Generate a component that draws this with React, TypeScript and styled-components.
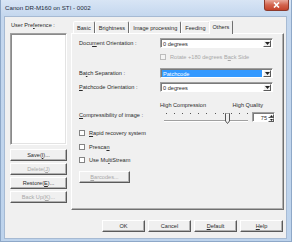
import styled, { createGlobalStyle } from "styled-components";

const GlobalStyle = createGlobalStyle`
  html, body {
    margin: 0;
    padding: 0;
    background: #ffffff;
  }
  body {
    font-family: "Liberation Sans", Arial, sans-serif;
    font-size: 5.6px;
    color: #2a2a2a;
  }
`;

const Window = styled.div`
  width: 292px;
  height: 242px;
  box-sizing: border-box;
  display: flex;
  flex-direction: column;
  background: linear-gradient(#d8e5f5, #c4d7ee 16px, #bdd3ec);
  padding: 0 4px 3px 3px;
  border-left: 1px solid #8ea8c8;
  border-bottom: 1px solid #8ea8c8;
  border-right: 1px solid #8ea8c8;
`;

const TitleBar = styled.div`
  height: 16px;
  display: flex;
  align-items: flex-start;
`;

const TitleText = styled.span`
  font-size: 6.2px;
  line-height: 16px;
  color: #1e2b3c;
  padding-left: 1px;
`;

const CloseButton = styled.div`
  margin-left: auto;
  margin-right: -2px;
  width: 25px;
  height: 11px;
  box-sizing: border-box;
  border: 1px solid #8c3a2c;
  border-top: none;
  border-radius: 0 0 3px 3px;
  background: linear-gradient(#e9a99b, #d2634d 50%, #c4432b);
  display: flex;
  align-items: center;
  justify-content: center;
`;

const Client = styled.div`
  flex: 1;
  display: flex;
  background: #f0f0f0;
  border: 1px solid #a6bad3;
  padding: 2px 2px 6px 5px;
`;

const LeftColumn = styled.div`
  width: 60px;
  margin-right: 4px;
  display: flex;
  flex-direction: column;
  padding-top: 2px;
`;

const Caption = styled.div`
  height: 8px;
  line-height: 8px;
  padding-left: 1px;
  white-space: nowrap;
`;

const ListBox = styled.div`
  margin-top: 4px;
  height: 112px;
  box-sizing: border-box;
  background: #ffffff;
  border: 1px solid;
  border-color: #a0a0a0 #ffffff #ffffff #a0a0a0;
  box-shadow: inset 1px 1px 0 #8a8a8a, inset -1px -1px 0 #e3e3e3;
`;

const ButtonStack = styled.div`
  margin-top: 4px;
  display: flex;
  flex-direction: column;
  gap: 2px;
`;

const Button = styled.div<{ $width?: number; $disabled?: boolean }>`
  width: ${(p) => (p.$width ? `${p.$width}px` : "100%")};
  height: 12px;
  box-sizing: border-box;
  display: flex;
  align-items: center;
  justify-content: center;
  background: #f0f0f0;
  border: 1px solid;
  border-color: #ffffff #5a5a5a #5a5a5a #ffffff;
  box-shadow: inset -1px -1px 0 #b0b0b0;
  color: ${(p) => (p.$disabled ? "#a8a8a8" : "#2a2a2a")};
  white-space: nowrap;
`;

const RightColumn = styled.div`
  flex: 1;
  display: flex;
  flex-direction: column;
`;

const TabStrip = styled.div`
  height: 14px;
  display: flex;
  align-items: flex-end;
  padding-left: 2px;
`;

const Tab = styled.div<{ $active?: boolean }>`
  height: ${(p) => (p.$active ? "14px" : "12px")};
  box-sizing: border-box;
  padding: 0 3px;
  display: flex;
  align-items: center;
  border: 1px solid;
  border-bottom: none;
  border-color: #ffffff #707070 transparent #ffffff;
  border-radius: 2px 2px 0 0;
  background: #f0f0f0;
  white-space: nowrap;
  position: relative;
  z-index: ${(p) => (p.$active ? 2 : 1)};
  margin: ${(p) => (p.$active ? "0 -1px -1px -1px" : "0")};
  padding-bottom: ${(p) => (p.$active ? "2px" : "0")};
`;

const Panel = styled.div`
  height: 177px;
  box-sizing: border-box;
  border: 1px solid;
  border-color: #ffffff #707070 #707070 #ffffff;
  box-shadow: inset -1px -1px 0 #b0b0b0;
  background: #f0f0f0;
  padding: 0 7px 0 7px;
  display: flex;
  flex-direction: column;
`;

const FieldRow = styled.div<{ $top: number; $height: number }>`
  margin-top: ${(p) => p.$top}px;
  height: ${(p) => p.$height}px;
  display: grid;
  grid-template-columns: 81px 113px;
  align-items: center;
  white-space: nowrap;
`;

const Select = styled.div`
  height: 10px;
  box-sizing: border-box;
  background: #ffffff;
  border: 1px solid;
  border-color: #a0a0a0 #ffffff #ffffff #a0a0a0;
  box-shadow: inset 1px 1px 0 #7a7a7a;
  display: flex;
  padding: 1px 1px 0 1px;
`;

const SelectValue = styled.div<{ $selected?: boolean }>`
  flex: 1;
  display: flex;
  align-items: center;
  padding-left: 1px;
  margin-right: 1px;
  background: ${(p) => (p.$selected ? "#3399ff" : "transparent")};
  color: ${(p) => (p.$selected ? "#ffffff" : "#2a2a2a")};
`;

const ArrowBox = styled.div`
  width: 8px;
  box-sizing: border-box;
  background: #f0f0f0;
  border: 1px solid;
  border-color: #ffffff #5a5a5a #5a5a5a #ffffff;
  display: flex;
  align-items: center;
  justify-content: center;
`;

const Check = styled.span<{ $disabled?: boolean }>`
  display: inline-flex;
  align-items: center;
  gap: 4px;
  color: ${(p) => (p.$disabled ? "#a8a8a8" : "#2a2a2a")};
`;

const Box = styled.span<{ $disabled?: boolean }>`
  width: 6px;
  height: 6px;
  box-sizing: border-box;
  border: 1px solid ${(p) => (p.$disabled ? "#bdbdbd" : "#848484")};
  background: ${(p) => (p.$disabled ? "#f4f4f4" : "#ffffff")};
`;

const ScaleLabels = styled.div`
  display: flex;
  justify-content: space-between;
  width: 103px;
`;

const SliderRow = styled.div`
  margin-top: 2px;
  height: 16px;
  display: grid;
  grid-template-columns: 81px 116px;
  white-space: nowrap;
`;

const SideLabel = styled.div`
  padding-top: 2px;
`;

const SliderArea = styled.div`
  display: flex;
  align-items: flex-start;
`;

const Slider = styled.div`
  width: 90px;
  height: 16px;
  position: relative;
`;

const Ticks = styled.div`
  display: flex;
  justify-content: space-between;
  padding: 3px 2px 0 6px;
`;

const Tick = styled.span`
  width: 1px;
  height: 1px;
  background: #555555;
`;

const Track = styled.div`
  margin: 6px 0 0 4px;
  width: 84px;
  height: 2px;
  box-sizing: border-box;
  border-top: 1px solid #a0a0a0;
  border-bottom: 1px solid #ffffff;
`;

const Thumb = styled.svg`
  position: absolute;
  left: 65px;
  top: 3px;
`;

const Spin = styled.div`
  margin-left: 2px;
  margin-top: 2px;
  width: 23px;
  height: 10px;
  box-sizing: border-box;
  background: #ffffff;
  border: 1px solid;
  border-color: #a0a0a0 #ffffff #ffffff #a0a0a0;
  box-shadow: inset 1px 1px 0 #7a7a7a;
  display: flex;
  padding: 1px 0 0 1px;
`;

const SpinValue = styled.div`
  flex: 1;
  text-align: right;
  padding-right: 1px;
  line-height: 8px;
`;

const SpinArrows = styled.div`
  width: 6px;
  display: flex;
  flex-direction: column;
`;

const SpinHalf = styled.div`
  flex: 1;
  box-sizing: border-box;
  background: #f0f0f0;
  border: 1px solid;
  border-color: #ffffff #5a5a5a #5a5a5a #ffffff;
  display: flex;
  align-items: center;
  justify-content: center;
`;

const CheckRow = styled.div<{ $top: number }>`
  margin-top: ${(p) => p.$top}px;
  height: 8px;
  display: flex;
  align-items: center;
  white-space: nowrap;
`;

const BarcodesWrap = styled.div`
  margin-top: 7px;
`;

const ButtonRow = styled.div`
  margin-top: 10px;
  display: flex;
  justify-content: flex-end;
  gap: 3px;
  padding-right: 1px;
`;

const Mn = styled.span`
  text-decoration: underline;
`;

const DownArrow = () => (
  <svg width="5" height="3" viewBox="0 0 5 3">
    <path d="M0 0h5L2.5 3z" fill="#222" />
  </svg>
);

const Dropdown = ({ value, selected }: { value: string; selected?: boolean }) => (
  <Select>
    <SelectValue $selected={selected}>{value}</SelectValue>
    <ArrowBox>
      <DownArrow />
    </ArrowBox>
  </Select>
);

const tabs = ["Basic", "Brightness", "Image processing", "Feeding", "Others"];

export default function App() {
  return (
    <>
      <GlobalStyle />
      <Window>
        <TitleBar>
          <TitleText>Canon DR-M160 on STI - 0002</TitleText>
          <CloseButton>
            <svg width="7" height="6" viewBox="0 0 7 6">
              <path d="M1 0.5l5 5M6 0.5l-5 5" stroke="#fff" strokeWidth="1.6" />
            </svg>
          </CloseButton>
        </TitleBar>
        <Client>
          <LeftColumn>
            <Caption>
              User Pre<Mn>f</Mn>erence :
            </Caption>
            <ListBox />
            <ButtonStack>
              <Button>
                Save(<Mn>I</Mn>)...
              </Button>
              <Button $disabled>
                Delete(<Mn>J</Mn>)
              </Button>
              <Button>
                Restore(<Mn>E</Mn>)...
              </Button>
              <Button $disabled>
                Back Up(<Mn>K</Mn>)...
              </Button>
            </ButtonStack>
          </LeftColumn>
          <RightColumn>
            <TabStrip>
              {tabs.map((t) => (
                <Tab key={t} $active={t === "Others"}>
                  {t}
                </Tab>
              ))}
            </TabStrip>
            <Panel>
              <FieldRow $top={4} $height={10}>
                <span>
                  Docu<Mn>m</Mn>ent Orientation :
                </span>
                <Dropdown value="0 degrees" />
              </FieldRow>
              <FieldRow $top={5} $height={8}>
                <span />
                <Check $disabled>
                  <Box $disabled />
                  <span>
                    Rotate +180 degrees B<Mn>a</Mn>ck Side
                  </span>
                </Check>
              </FieldRow>
              <FieldRow $top={7} $height={10}>
                <span>
                  Ba<Mn>t</Mn>ch Separation :
                </span>
                <Dropdown value="Patchcode" selected />
              </FieldRow>
              <FieldRow $top={4} $height={10}>
                <span>
                  <Mn>P</Mn>atchcode Orientation :
                </span>
                <Dropdown value="0 degrees" />
              </FieldRow>
              <FieldRow $top={10} $height={6}>
                <span />
                <ScaleLabels>
                  <span>High Compression</span>
                  <span>High Quality</span>
                </ScaleLabels>
              </FieldRow>
              <SliderRow>
                <SideLabel>
                  <Mn>C</Mn>ompressibility of image :
                </SideLabel>
                <SliderArea>
                  <Slider>
                    <Ticks>
                      {Array.from({ length: 11 }).map((_, i) => (
                        <Tick key={i} />
                      ))}
                    </Ticks>
                    <Track />
                    <Thumb width="5" height="11" viewBox="0 0 5 11">
                      <path d="M0.5 0.5h4v7.5L2.5 10.5L0.5 8z" fill="#f0f0f0" stroke="#555" />
                      <path d="M1 1h3" stroke="#fff" />
                    </Thumb>
                  </Slider>
                  <Spin>
                    <SpinValue>75</SpinValue>
                    <SpinArrows>
                      <SpinHalf>
                        <svg width="3" height="2" viewBox="0 0 3 2">
                          <path d="M0 2h3L1.5 0z" fill="#222" />
                        </svg>
                      </SpinHalf>
                      <SpinHalf>
                        <svg width="3" height="2" viewBox="0 0 3 2">
                          <path d="M0 0h3L1.5 2z" fill="#222" />
                        </svg>
                      </SpinHalf>
                    </SpinArrows>
                  </Spin>
                </SliderArea>
              </SliderRow>
              <CheckRow $top={3}>
                <Check>
                  <Box />
                  <span>
                    <Mn>R</Mn>apid recovery system
                  </span>
                </Check>
              </CheckRow>
              <CheckRow $top={6}>
                <Check>
                  <Box />
                  <span>
                    Presca<Mn>n</Mn>
                  </span>
                </Check>
              </CheckRow>
              <CheckRow $top={5}>
                <Check>
                  <Box />
                  <span>
                    Use Mu<Mn>l</Mn>tiStream
                  </span>
                </Check>
              </CheckRow>
              <BarcodesWrap>
                <Button $width={51} $disabled>
                  <span>
                    <Mn>B</Mn>arcodes...
                  </span>
                </Button>
              </BarcodesWrap>
            </Panel>
            <ButtonRow>
              <Button $width={43}>OK</Button>
              <Button $width={43}>Cancel</Button>
              <Button $width={43}>
                <span>
                  <Mn>D</Mn>efault
                </span>
              </Button>
              <Button $width={43}>
                <span>
                  <Mn>H</Mn>elp
                </span>
              </Button>
            </ButtonRow>
          </RightColumn>
        </Client>
      </Window>
    </>
  );
}
